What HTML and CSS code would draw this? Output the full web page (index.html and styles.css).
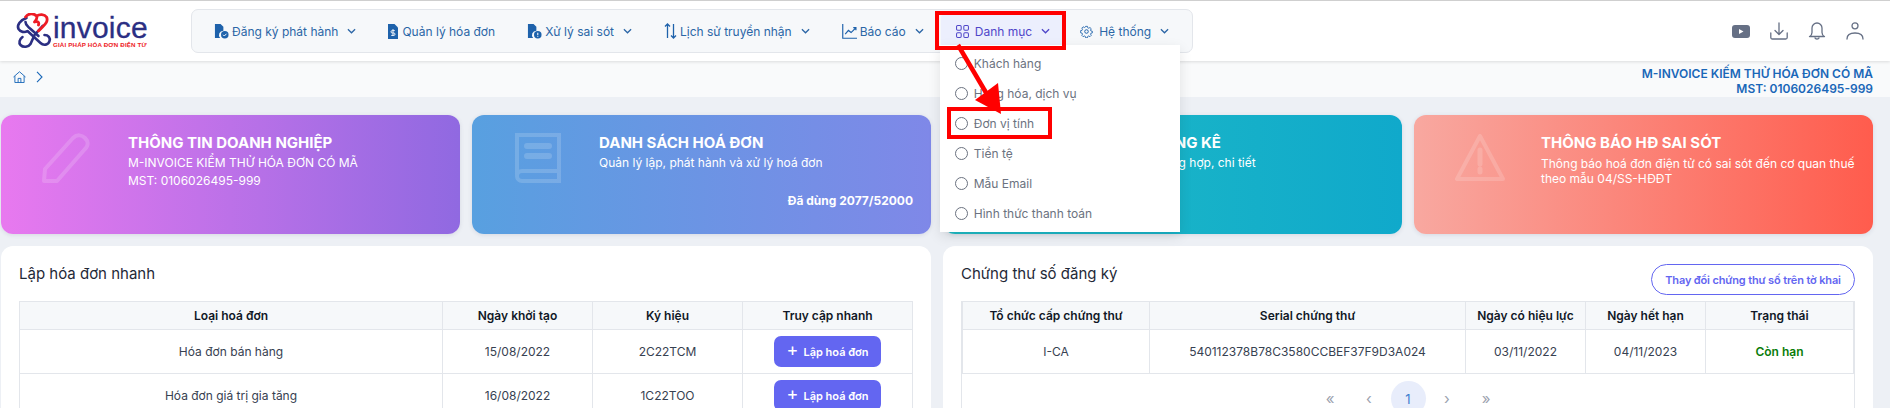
FILE: index.html
```html
<!DOCTYPE html>
<html lang="vi">
<head>
<meta charset="utf-8">
<title>M-Invoice</title>
<link rel="stylesheet" href="styles.css">
</head>
<body>
<header class="topbar">
  <a class="logo">
    <svg class="logo-mark" viewBox="0 0 36 36" fill="none" stroke-linecap="round" stroke-linejoin="round">
      <g stroke="#2b2f83" stroke-width="2.600">
        <path d="M11 5C5 7 1 12 3 16c2 3 6 4 9 2l13 12c3 3 8 2 9-2 1-3-1-6-5-6"/>
        <path d="M7 24c-3 2-4 6-2 8 3 3 8 2 10-1l4-9 8-9"/>
        <path d="M10 9c0 3 2 4 4 6l9 8"/>
      </g>
      <path d="M10 4C13 0 18 0 21 3c3-2 8-2 10 1 2 4-1 7-4 10l-4 4M21 3c1 2 0 4-2 6 3-1 5 0 4 3" stroke="#ee1c25" stroke-width="2.800"/>
    </svg>
    <span class="logo-text">
      <span class="logo-name">invoice</span>
      <span class="logo-tag">GIẢI PHÁP HÓA ĐƠN ĐIỆN TỬ</span>
    </span>
  </a>
  <nav class="nav">
    <a class="nav-item">
      <svg class="ic ic-doc" viewBox="0 0 16 16"><path d="M1 0h6l3 3v4.200A4.600 4.600 0 0 0 6.600 15H1z" fill="currentColor"/><circle cx="11.500" cy="11.500" r="4" fill="currentColor"/><path d="M9.700 11.500l1.300 1.300 2.300-2.400" stroke="#fff" stroke-width="1" fill="none"/></svg>
      <span>Đăng ký phát hành</span>
      <svg class="chev" viewBox="0 0 10 6"><path d="M1 1l4 4 4-4"/></svg>
    </a>
    <a class="nav-item">
      <svg class="ic ic-bill" viewBox="0 0 10 15"><path d="M0 0h6.500L10 3.500V15H0z" fill="currentColor"/><path d="M5 5v7M6.800 6.600H4.200a1 1 0 0 0 0 2.400h1.600a1 1 0 0 1 0 2.400H3.200" stroke="#fff" stroke-width=".9" fill="none"/></svg>
      <span>Quản lý hóa đơn</span>
    </a>
    <a class="nav-item">
      <svg class="ic ic-doc" viewBox="0 0 16 16"><path d="M1 0h6l3 3v4.200A4.600 4.600 0 0 0 6.600 15H1z" fill="currentColor"/><circle cx="11.500" cy="11.500" r="4" fill="currentColor"/><path d="M11.500 9.200v2.800M11.500 13v.8" stroke="#fff" stroke-width="1.100" fill="none"/></svg>
      <span>Xử lý sai sót</span>
      <svg class="chev" viewBox="0 0 10 6"><path d="M1 1l4 4 4-4"/></svg>
    </a>
    <a class="nav-item">
      <svg class="ic ic-sort" viewBox="0 0 13 16"><path d="M3.500 15V1M1 3.500L3.500 1 6 3.500M9.500 1v14M7 12.500L9.500 15l2.500-2.500" stroke="currentColor" stroke-width="1.300" fill="none"/></svg>
      <span>Lịch sử truyền nhận</span>
      <svg class="chev" viewBox="0 0 10 6"><path d="M1 1l4 4 4-4"/></svg>
    </a>
    <a class="nav-item">
      <svg class="ic ic-doc" viewBox="0 0 14 14"><path d="M.7 0v13.300H14M3 9.500l3-3.500 2.500 2L13 3.500M10.500 3.300H13v2.500" stroke="currentColor" stroke-width="1.100" fill="none"/></svg>
      <span>Báo cáo</span>
      <svg class="chev" viewBox="0 0 10 6"><path d="M1 1l4 4 4-4"/></svg>
    </a>
    <div class="nav-wrap">
      <a class="nav-item is-active">
        <svg class="ic ic-grid" viewBox="0 0 14 14"><g fill="none" stroke="currentColor" stroke-width="1.100"><rect x=".6" y=".6" width="5" height="5" rx="1.200"/><rect x="8.400" y=".6" width="5" height="5" rx="1.200"/><rect x=".6" y="8.400" width="5" height="5" rx="1.200"/><rect x="8.400" y="8.400" width="5" height="5" rx="1.200"/></g></svg>
        <span>Danh mục</span>
        <svg class="chev" viewBox="0 0 10 6"><path d="M1 1l4 4 4-4"/></svg>
      </a>
      <ul class="menu">
        <li class="menu-item"><i class="radio"></i>Khách hàng</li>
        <li class="menu-item"><i class="radio"></i>Hàng hóa, dịch vụ</li>
        <li class="menu-item"><i class="radio"></i>Đơn vị tính</li>
        <li class="menu-item"><i class="radio"></i>Tiền tệ</li>
        <li class="menu-item"><i class="radio"></i>Mẫu Email</li>
        <li class="menu-item"><i class="radio"></i>Hình thức thanh toán</li>
      </ul>
    </div>
    <a class="nav-item">
      <svg class="ic ic-grid" viewBox="0 0 16 16"><g fill="none" stroke="currentColor" stroke-width="1.200" stroke-linejoin="round"><circle cx="8" cy="8" r="2.200"/><path d="M6.700 1h2.600l.4 2 1.300.6 1.800-1 1.800 1.800-1 1.800.6 1.300 2 .4v2.200l-2 .4-.6 1.300 1 1.800-1.800 1.800-1.800-1-1.300.6-.4 2H6.700l-.4-2-1.300-.6-1.800 1-1.800-1.800 1-1.800-.6-1.300-2-.4V6.900l2-.4.6-1.300-1-1.800 1.800-1.800 1.800 1 1.300-.6z" transform="translate(1 .8) scale(.88)"/></g></svg>
      <span>Hệ thống</span>
      <svg class="chev" viewBox="0 0 10 6"><path d="M1 1l4 4 4-4"/></svg>
    </a>
  </nav>
  <div class="tools">
    <svg class="tool tool-yt" viewBox="0 0 18 13"><rect width="18" height="13" rx="3" fill="#667085"/><path d="M7 4l4.500 2.500L7 9z" fill="#fff"/></svg>
    <svg class="tool" viewBox="0 0 18 18" fill="none" stroke="#667085" stroke-width="1.300" stroke-linecap="round" stroke-linejoin="round"><path d="M9 1v11M5 8.500L9 12.500l4-4M.8 11v4.500a1.500 1.500 0 0 0 1.500 1.500h13.400a1.500 1.500 0 0 0 1.500-1.500V11"/></svg>
    <svg class="tool" viewBox="0 0 18 18" fill="none" stroke="#667085" stroke-width="1.300" stroke-linecap="round" stroke-linejoin="round"><path d="M9 1a5 5 0 0 0-5 5v4.500C4 12.500 2.500 14 1.500 14.500h15C15.500 14 14 12.500 14 10.500V6a5 5 0 0 0-5-5zM7 16c.5 1.300 3.500 1.300 4 0"/></svg>
    <svg class="tool" viewBox="0 0 18 18" fill="none" stroke="#667085" stroke-width="1.300" stroke-linecap="round"><circle cx="9" cy="3.800" r="3"/><path d="M1 17c0-4 3.500-6 8-6s8 2 8 6"/></svg>
  </div>
</header>

<div class="crumbbar">
  <div class="crumbs">
    <svg class="home" viewBox="0 0 14 13" fill="none" stroke="#1967b8" stroke-width="1"><path d="M.5 6.500L7 .8l6.500 5.700M2 5.500v7h10v-7M5.500 12.500V8h3v4.500"/></svg>
    <svg class="crumb-sep" viewBox="0 0 7 12" fill="none" stroke="#1967b8" stroke-width="1.100"><path d="M1 .8L6 6l-5 5.200"/></svg>
  </div>
  <div class="company">
    <div>M-INVOICE KIẾM THỬ HÓA ĐƠN CÓ MÃ</div>
    <div>MST: 0106026495-999</div>
  </div>
</div>

<main class="main">
  <section class="cards">
    <article class="card card-purple">
      <svg class="card-icon" viewBox="0 0 50 50" fill="none" stroke="#fff" stroke-width="4" stroke-linejoin="round"><path d="M3 36L31 5c4-4 9-3 12 0s4 7 0 11L15 48H2z"/></svg>
      <div class="card-body">
        <h3 class="card-title">THÔNG TIN DOANH NGHIỆP</h3>
        <p class="card-line">M-INVOICE KIỂM THỬ HÓA ĐƠN CÓ MÃ</p>
        <p class="card-line card-line-gap">MST: 0106026495-999</p>
      </div>
    </article>
    <article class="card card-blue">
      <svg class="card-icon" viewBox="0 0 50 50" fill="none" stroke="#fff" stroke-width="4"><path d="M4 42V2h42v46H9a5 5 0 0 1-5-5 5 5 0 0 1 5-5h37"/><path d="M14 13h22M14 23h22" stroke-width="6" stroke-linecap="round"/></svg>
      <div class="card-body">
        <h3 class="card-title">DANH SÁCH HOÁ ĐƠN</h3>
        <p class="card-line">Quản lý lập, phát hành và xử lý hoá đơn</p>
        <p class="card-used">Đã dùng 2077/52000</p>
      </div>
    </article>
    <article class="card card-teal">
      <svg class="card-icon" viewBox="0 0 50 50" fill="none" stroke="#fff" stroke-width="4"><path d="M5 45V25h10v20M20 45V5h10v40M35 45V15h10v30"/></svg>
      <div class="card-body">
        <h3 class="card-title">BÁO CÁO THỐNG KÊ</h3>
        <p class="card-line">Những báo cáo tổng hợp, chi tiết</p>
      </div>
    </article>
    <article class="card card-red">
      <svg class="card-icon" viewBox="0 0 50 50" fill="none" stroke="#fff" stroke-width="4" stroke-linejoin="round"><path d="M25 3L2 46h46z"/><path d="M25 17v14M25 36v3" stroke-width="5" stroke-linecap="round"/></svg>
      <div class="card-body">
        <h3 class="card-title">THÔNG BÁO HĐ SAI SÓT</h3>
        <p class="card-line card-line-tight">Thông báo hoá đơn điện tử có sai sót đến cơ quan thuế theo mẫu 04/SS-HĐĐT</p>
      </div>
    </article>
  </section>

  <section class="panels">
    <article class="panel">
      <div class="panel-head"><h2 class="panel-title">Lập hóa đơn nhanh</h2></div>
      <table class="grid grid-left">
        <thead><tr><th>Loại hoá đơn</th><th>Ngày khởi tạo</th><th>Ký hiệu</th><th>Truy cập nhanh</th></tr></thead>
        <tbody>
          <tr><td>Hóa đơn bán hàng</td><td>15/08/2022</td><td>2C22TCM</td><td><button class="btn-add"><span class="plus">+</span>Lập hoá đơn</button></td></tr>
          <tr><td>Hóa đơn giá trị gia tăng</td><td>16/08/2022</td><td>1C22TOO</td><td><button class="btn-add"><span class="plus">+</span>Lập hoá đơn</button></td></tr>
        </tbody>
      </table>
    </article>
    <article class="panel">
      <div class="panel-head">
        <h2 class="panel-title">Chứng thư số đăng ký</h2>
        <button class="btn-outline">Thay đổi chứng thư số trên tờ khai</button>
      </div>
      <div class="grid-box">
        <table class="grid grid-right">
          <thead><tr><th>Tổ chức cấp chứng thư</th><th>Serial chứng thư</th><th>Ngày có hiệu lực</th><th>Ngày hết hạn</th><th>Trạng thái</th></tr></thead>
          <tbody><tr><td>I-CA</td><td>540112378B78C3580CCBEF37F9D3A024</td><td>03/11/2022</td><td>04/11/2023</td><td class="ok">Còn hạn</td></tr></tbody>
        </table>
        <div class="pager">
          <span class="pg">«</span><span class="pg">‹</span><span class="pg pg-on">1</span><span class="pg">›</span><span class="pg">»</span>
        </div>
      </div>
    </article>
  </section>
</main>

<div class="mark mark-tab"></div>
<div class="mark mark-row"></div>
<svg class="mark-arrow" viewBox="0 0 80 80"><path d="M8 5L38 56" stroke="#f00" stroke-width="4.500"/><path d="M25 60L48 43 51 74z" fill="#f00"/></svg>
</body>
</html>
```
FILE: styles.css
```css
* { box-sizing: border-box; }
html, body { margin: 0; height: 408px; overflow: hidden; }
body {
  position: relative;
  width: 1890px;
  background: #edf0f5;
  border-top: 1px solid #cfcfcf;
  font-family: Inter, "Noto Sans", sans-serif;
  font-size: 12px;
  color: #374151;
}

/* Top bar */
.topbar {
  position: relative;
  z-index: 3;
  display: flex;
  align-items: flex-start;
  height: 60px;
  background: #fff;
  box-shadow: 0 1px 3px rgba(0,0,0,.12);
}
.logo { display: flex; align-items: flex-end; width: 191px; padding: 12px 0 0 15px; flex: none; }
.logo-mark { width: 37px; height: 36px; flex: none; }
.logo-text { display: flex; flex-direction: column; margin-left: 1px; width: 100px; }
.logo-name {
  font-family: "Liberation Sans", sans-serif;
  font-size: 30px;
  line-height: 24px;
  letter-spacing: .2px;
  color: #2b2f83;
  -webkit-text-stroke: .3px #2b2f83;
}
.logo-tag {
  font-family: "Liberation Sans", sans-serif;
  font-size: 6.200px;
  font-weight: 700;
  line-height: 9px;
  letter-spacing: .16px;
  color: #ee1c25;
  white-space: nowrap;
}
.nav {
  display: flex;
  align-items: center;
  width: 1002px;
  height: 44px;
  margin-top: 8px;
  padding: 0 7px;
  background: #f6f8fa;
  border: 1px solid #e3e6eb;
  border-radius: 7px;
  flex: none;
}
.nav-wrap { position: relative; }
.nav-item {
  display: flex;
  align-items: center;
  height: 36px;
  padding: 0 17px 0 15px;
  border-radius: 5px;
  color: #2b66a6;
  white-space: nowrap;
}
.nav-item.is-active { background: #eceffd; color: #4f46c9; padding-right: 15px; }
.ic { flex: none; margin-right: 3px; color: #1e62ab; }
.is-active .ic { color: #4f46c9; margin-right: 6px; }
.ic-doc { width: 15px; height: 15px; }
.ic-bill { width: 10px; height: 15px; margin-right: 4px; }
.ic-sort { width: 13px; height: 16px; }
.ic-grid { width: 13px; height: 13px; margin-right: 6px; }
.chev { width: 9px; height: 6px; margin-left: 9px; fill: none; stroke: currentColor; stroke-width: 1.400; flex: none; }
.tools { display: flex; align-items: center; gap: 20px; margin-left: auto; padding-right: 26px; height: 60px; }
.tool { width: 18px; height: 18px; display: block; }
.tool-yt { height: 13px; }

/* Dropdown menu */
.menu {
  position: absolute;
  left: -1px;
  top: 32px;
  width: 240px;
  height: 187px;
  margin: 0;
  padding: 3px 0 0;
  list-style: none;
  background: #fff;
  box-shadow: 0 4px 12px rgba(0,0,0,.1);
}
.menu-item { display: flex; align-items: center; height: 30px; padding-left: 15px; color: #6b7280; }
.radio { width: 13px; height: 13px; margin-right: 6px; border: 1px solid #6b7280; border-radius: 50%; flex: none; }

/* Breadcrumb */
.crumbbar {
  display: flex;
  justify-content: space-between;
  height: 36px;
  padding: 5px 17px 0 13px;
  background: #f9fafb;
}
.crumbs { display: flex; align-items: center; gap: 10px; height: 22px; }
.home { width: 13px; height: 12px; }
.crumb-sep { width: 7px; height: 12px; }
.company { text-align: right; color: #1967b8; font-weight: 600; font-size: 12px; line-height: 15px; }

/* Main */
.main { padding: 18px 17px 0 1px; }
.cards { display: grid; grid-template-columns: repeat(4, 1fr); gap: 12px; }
.card {
  display: flex;
  height: 119px;
  padding: 18px 12px 0 41px;
  border-radius: 12px;
  color: #fff;
  box-shadow: 0 1px 4px rgba(80,90,120,.15);
}
.card-purple { background: linear-gradient(90deg, #e879ef, #9069e1); }
.card-blue { background: linear-gradient(90deg, #58a0e0, #7f88e8); }
.card-teal { background: linear-gradient(90deg, #20bcc5, #10a9cb); }
.card-red { background: linear-gradient(90deg, #f8a8a0, #ff5c4d); }
.card-icon { width: 50px; height: 50px; flex: none; opacity: .16; margin-right: 36px; }
.card-body { flex: 1; display: flex; flex-direction: column; min-width: 0; }
.card-title { margin: 0; font-size: 15px; font-weight: 700; line-height: 20px; }
.card-line { margin: 0; font-size: 12px; line-height: 20px; }
.card-line-gap { margin-top: -2px; }
.card-line-tight { line-height: 15px; margin-top: 2px; padding-top: 1px; }
.card-used { margin: 18px 0 0; text-align: right; font-weight: 700; line-height: 20px; padding-right: 6px; }

/* Panels */
.panels { display: grid; grid-template-columns: 1fr 1fr; gap: 12px; margin-top: 12px; }
.panel { height: 300px; padding: 0 18px; background: #fff; border-radius: 12px; }
.panel-head { display: flex; justify-content: space-between; align-items: flex-start; height: 55px; padding-top: 18px; }
.panel-title { margin: 0; font-size: 15px; font-weight: 400; line-height: 19px; color: #1f2937; }
.btn-outline {
  width: 204px;
  height: 31px;
  padding: 0;
  background: #fff;
  border: 1px solid #6366f1;
  border-radius: 16px;
  color: #6366f1;
  font: 600 11px Inter, sans-serif;
  letter-spacing: -.15px;
}
.grid { width: 100%; border-collapse: collapse; table-layout: fixed; }
.grid th, .grid td { border: 1px solid #e3e6eb; text-align: center; padding: 0; font-size: 12px; }
.grid th { height: 28px; background: #f6f8fa; color: #111827; font-weight: 600; }
.grid td { height: 44px; }
.grid-left th:nth-child(1) { width: 423px; }
.grid-left th:nth-child(2), .grid-left th:nth-child(3) { width: 150px; }
.grid-right th:nth-child(1) { width: 187px; }
.grid-right th:nth-child(2) { width: 316px; }
.grid-right th:nth-child(3), .grid-right th:nth-child(4) { width: 120px; }
.grid-box { border: solid #e3e6eb; border-width: 0 1px; }
.ok { color: #0a7d0a; font-weight: 600; }
.btn-add {
  display: inline-flex;
  align-items: center;
  justify-content: center;
  width: 107px;
  height: 31px;
  padding: 0;
  background: #6366f1;
  border: 0;
  border-radius: 7px;
  color: #fff;
  font: 600 11px Inter, sans-serif;
  vertical-align: middle;
}
.plus { font-size: 18px; font-weight: 400; line-height: 18px; margin-right: 5px; margin-top: -3px; }
.pager { display: flex; justify-content: center; align-items: center; gap: 4px; padding-top: 7px; }
.pg { width: 35px; height: 35px; display: flex; align-items: center; justify-content: center; border-radius: 50%; color: #9ca3af; font-size: 15px; }
.pg-on { background: #e8edfb; color: #3f7fd0; font-size: 13px; }

/* Red annotations drawn over the screenshot */
.mark { position: absolute; z-index: 5; border: 4px solid #f00; }
.mark-tab { left: 935px; top: 10px; width: 131px; height: 39px; }
.mark-row { left: 947px; top: 106px; width: 105px; height: 32px; }
.mark-arrow { position: absolute; z-index: 6; left: 950px; top: 39px; width: 80px; height: 80px; }
```
